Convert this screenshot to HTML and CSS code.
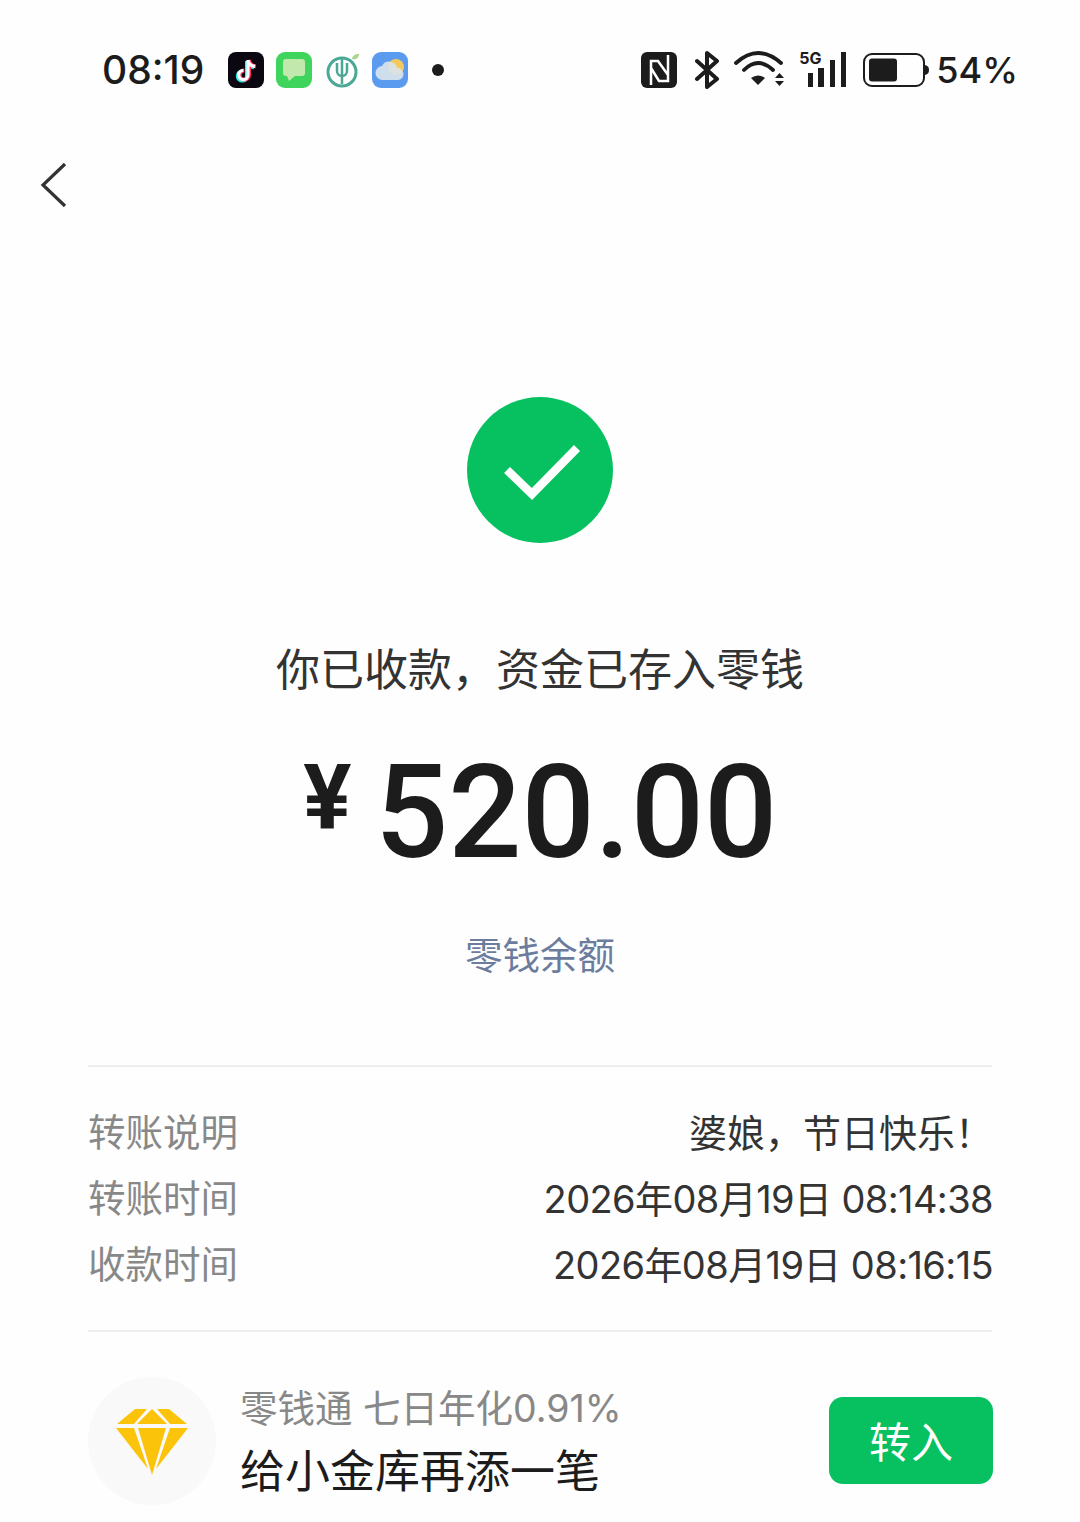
FILE: index.html
```html
<!DOCTYPE HTML>
<html>
<head>
  <title>收款详情</title>
  <meta charset="utf-8">
  <link rel="stylesheet" href="styles.css">
</head>
<body>
  <div class="status">
    <div class="status-left">
      <span class="time">08:19</span>
      <svg class="ic-app" viewBox="0 0 36 36"><rect width="36" height="36" rx="8" fill="#0b0710"/><path d="M20 8v15a4.600 4.600 0 1 1-4.600-4.600M20 8c.5 3.700 3 6 7 6.300" fill="none" stroke="#25f4ee" stroke-width="4" transform="translate(-1 1)"/><path d="M20 8v15a4.600 4.600 0 1 1-4.600-4.600M20 8c.5 3.700 3 6 7 6.300" fill="none" stroke="#fe2c55" stroke-width="4" transform="translate(1 0)"/><path d="M20 8v15a4.600 4.600 0 1 1-4.600-4.600M20 8c.5 3.700 3 6 7 6.300" fill="none" stroke="#fff" stroke-width="3.200"/></svg>
      <svg class="ic-msg" viewBox="0 0 36 36"><rect width="36" height="36" rx="9" fill="#3fd45c"/><rect x="7" y="7" width="22" height="17" rx="3" fill="#c3e8ae"/><path d="M11 24h8l-6 5z" fill="#c3e8ae"/></svg>
      <svg class="ic-leaf" viewBox="0 0 36 36"><circle cx="16" cy="20" r="14" fill="none" stroke="#4ca896" stroke-width="3"/><path d="M11 11v8a5 5 0 0 0 10 0v-8M16 6v26" fill="none" stroke="#4ca896" stroke-width="2.500"/><path d="M26 7c0-3 3-5 7-5 0 4-3 6-7 5z" fill="#a9d68c"/></svg>
      <svg class="ic-app" viewBox="0 0 36 36"><rect width="36" height="36" rx="9" fill="#5b9bef"/><circle cx="24" cy="15" r="8" fill="#f4c95d"/><path d="M11 28a7 7 0 0 1-1-14 8 8 0 0 1 15 2 6 6 0 0 1 1 12z" fill="#d9e4ec" opacity=".92"/></svg>
      <span class="dot"></span>
    </div>
    <div class="status-right">
      <svg class="ic-nfc" viewBox="0 0 36 36"><rect width="36" height="36" rx="6" fill="#1c1c1c"/><path d="M10 33V9h7l10 14M27 3v26h-9L10 16" fill="none" stroke="#fff" stroke-width="2.500"/></svg>
      <svg class="ic-bt" viewBox="0 0 26 38"><path d="M3 10l20 18-10 8V2l10 8L3 28" fill="none" stroke="#1c1c1c" stroke-width="4" stroke-linejoin="round" stroke-linecap="round"/></svg>
      <svg class="ic-wifi" viewBox="0 0 52 38"><path d="M2 12Q24-8 47 12M10 19Q24 5 39 19" fill="none" stroke="#1c1c1c" stroke-width="3.800" stroke-linecap="round"/><path d="M17 27Q24 22 31 27L24 34z" fill="#1c1c1c"/><path d="M41 27l4.500-5 4.500 5zM41 30l4.500 5 4.500-5z" fill="#1c1c1c"/></svg>
      <div class="signal">
        <span class="g5">5G</span>
        <svg class="bars" viewBox="0 0 48 38"><path d="M9 22h5v14H9zM19 17h6v19h-6zM31 9h5v27h-5zM42 1h5v35h-5z" fill="#1c1c1c"/></svg>
      </div>
      <svg class="ic-batt" viewBox="0 0 66 36"><rect x="1" y="2" width="60" height="32" rx="8" fill="none" stroke="#1c1c1c" stroke-width="2"/><rect x="6" y="6.500" width="28" height="23" rx="3" fill="#1c1c1c"/><path d="M62 13c3 .6 4 2.500 4 5s-1 4.400-4 5z" fill="#1c1c1c"/></svg>
      <span class="pct">54%</span>
    </div>
  </div>

  <div class="nav">
    <svg class="back" viewBox="0 0 28 46"><path d="M25 2L3 23l22 21" fill="none" stroke="#333" stroke-width="3.200"/></svg>
  </div>

  <div class="result">
    <svg class="ok" viewBox="0 0 146 146"><circle cx="73" cy="73" r="73" fill="#07c160"/><path d="M40 73l25 24 45-46" fill="none" stroke="#fff" stroke-width="8.500"/></svg>
    <div class="title">你已收款，资金已存入零钱</div>
    <div class="amount"><span class="yen">¥</span><span class="num">520.00</span></div>
    <div class="link">零钱余额</div>
  </div>

  <div class="details">
    <div class="row"><span class="label">转账说明</span><span class="value">婆娘，节日快乐！</span></div>
    <div class="row"><span class="label">转账时间</span><span class="value date">2026年08月19日 08:14:38</span></div>
    <div class="row"><span class="label">收款时间</span><span class="value date">2026年08月19日 08:16:15</span></div>
  </div>

  <div class="promo">
    <div class="gem">
      <svg class="gem-svg" viewBox="0 0 74 70"><path d="M20 1h12L19 16H2z" fill="#fcc30b"/><path d="M37 1l15 15H22z" fill="#fcc30b"/><path d="M54 1H42l13 15h17z" fill="#fcc30b"/><path d="M1 20h18l14 41z" fill="#fcc30b"/><path d="M23 20h28L37 67z" fill="#fcc30b"/><path d="M73 20H55L41 61z" fill="#fcc30b"/></svg>
    </div>
    <div class="promo-text">
      <div class="promo-sub">零钱通 七日年化0.91%</div>
      <div class="promo-main">给小金库再添一笔</div>
    </div>
    <div class="btn">转入</div>
  </div>
</body>
</html>
```

FILE: styles.css
```css
html, body{
  margin: 0; padding: 0;
  height: 100%;
}
body{
  width: 1080px;
  height: 1522px;
  overflow: hidden;
  color: #1c1c1c;
  background-color: #fefefe;
  font-family: "Inter", "Noto Sans CJK SC", sans-serif;
}
svg{
  display: block;
  flex: none;
}

.status{
  display: flex;
  justify-content: space-between;
  align-items: center;
  height: 40px;
  padding: 50px 62px 0 102px;
}
.status-left, .status-right{
  display: flex;
  align-items: center;
}
.time{
  width: 126px;
  font-size: 39px;
  font-weight: 500;
  line-height: 40px;
}
.ic-app{
  width: 36px;
  height: 36px;
  margin-right: 12px;
}
.ic-msg{
  width: 36px;
  height: 36px;
  margin-right: 14px;
}
.ic-leaf{
  width: 36px;
  height: 36px;
  margin-right: 10px;
}
.dot{
  width: 12px;
  height: 12px;
  margin-left: 12px;
  border-radius: 50%;
  background: #1c1c1c;
}
.ic-nfc{
  width: 36px;
  height: 36px;
  margin-right: 17px;
}
.ic-bt{
  width: 26px;
  height: 38px;
  margin-right: 14px;
}
.ic-wifi{
  width: 52px;
  height: 38px;
  margin-right: 13px;
}
.signal{
  position: relative;
  width: 48px;
  height: 38px;
  margin-right: 16px;
}
.g5{
  position: absolute;
  left: 0;
  top: -1px;
  font-size: 16px;
  font-weight: 700;
  line-height: 17px;
}
.bars{
  width: 48px;
  height: 38px;
}
.ic-batt{
  width: 66px;
  height: 36px;
  margin-right: 7px;
}
.pct{
  font-size: 36px;
  font-weight: 500;
  line-height: 40px;
}

.nav{
  box-sizing: border-box;
  height: 307px;
  padding: 72px 0 0 40px;
}
.back{
  width: 28px;
  height: 46px;
}

.result{
  display: flex;
  flex-direction: column;
  align-items: center;
  box-sizing: border-box;
  width: 904px;
  height: 670px;
  margin: 0 auto;
  border-bottom: 2px solid #eeeeee;
}
.ok{
  width: 146px;
  height: 146px;
}
.title{
  margin-top: 95px;
  color: #333333;
  font-size: 44px;
  line-height: 64px;
}
.amount{
  display: flex;
  align-items: flex-start;
  height: 150px;
  margin: 36px 7.500px 0 0;
}
.yen{
  margin: 1px 23.500px 0 8px;
  font-family: "Roboto", sans-serif;
  font-size: 90px;
  font-weight: 700;
  line-height: 120px;
}
.num{
  font-family: "Roboto", sans-serif;
  font-size: 129px;
  font-weight: 500;
  line-height: 150px;
}
.link{
  margin-top: 43px;
  color: #6b7c9c;
  font-size: 37.500px;
  line-height: 50px;
}

.details{
  box-sizing: border-box;
  width: 904px;
  height: 265px;
  margin: 0 auto;
  padding-top: 33px;
  border-bottom: 2px solid #eeeeee;
}
.row{
  display: flex;
  justify-content: space-between;
  height: 66px;
  font-size: 38px;
  line-height: 66px;
}
.label{
  color: #888888;
  font-size: 37.500px;
}
.value{
  margin-right: -1px;
  color: #333333;
}
.date{
  letter-spacing: -0.600px;
}

.promo{
  display: flex;
  align-items: center;
  width: 904px;
  height: 128px;
  margin: 45px auto 0;
}
.gem{
  display: flex;
  align-items: center;
  justify-content: center;
  width: 128px;
  height: 128px;
  margin-right: 24px;
  border-radius: 50%;
  background: #f9f9f9;
}
.gem-svg{
  width: 74px;
  height: 70px;
  margin-top: 4px;
}
.promo-text{
  flex: 1;
  padding-top: 6px;
}
.promo-sub{
  color: #888888;
  font-size: 37.500px;
  line-height: 54px;
}
.promo-main{
  font-size: 45px;
  line-height: 71px;
}
.btn{
  width: 164px;
  height: 87px;
  margin: 0 -1px 2px 0;
  border-radius: 14px;
  background: #07c160;
  color: #fff;
  font-size: 42px;
  line-height: 92px;
  text-align: center;
}
```
